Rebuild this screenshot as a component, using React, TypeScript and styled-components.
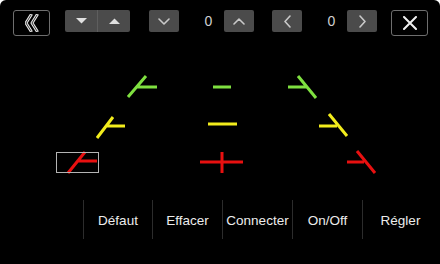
import styled, { createGlobalStyle } from 'styled-components';

const GlobalStyle = createGlobalStyle`
  html, body {
    margin: 0;
    padding: 0;
    background: #ffffff;
  }
  body {
    font-family: 'Liberation Sans', Arial, sans-serif;
  }
`;

const GREEN = '#7fe040';
const YELLOW = '#f2ec1c';
const RED = '#e81010';

const actions = [
  { label: 'Défaut', width: 69 },
  { label: 'Effacer', width: 70 },
  { label: 'Connecter', width: 70 },
  { label: 'On/Off', width: 70 },
  { label: 'Régler', width: 76 },
];

export default function App() {
  return (
    <>
      <GlobalStyle />
      <Screen>
        <TopBar>
          <OutlineButton>
            <svg width="14" height="18" viewBox="0 0 14 18">
              <g fill="none" strokeLinecap="round" strokeLinejoin="round">
                <path d="M6 1 L1 9 L6 17 M12 1 L7 9 L12 17" stroke="#e6e6e6" strokeWidth="3" />
                <path d="M6 1 L1 9 L6 17 M12 1 L7 9 L12 17" stroke="#3a3a3a" strokeWidth="1" />
              </g>
            </svg>
          </OutlineButton>
          <Group>
            <GroupHalf>
              <svg width="11" height="6" viewBox="0 0 11 6">
                <path d="M0 0 H11 L5.5 5.5 Z" fill="#e0e0e0" />
              </svg>
            </GroupHalf>
            <GroupHalf divided>
              <svg width="11" height="6" viewBox="0 0 11 6">
                <path d="M0 6 H11 L5.5 0.5 Z" fill="#e0e0e0" />
              </svg>
            </GroupHalf>
          </Group>
          <StepButton gap={19}>
            <Chevron d="M1 1 L6 6 L11 1" w={12} h={7} />
          </StepButton>
          <Value>0</Value>
          <StepButton>
            <Chevron d="M1 6 L6 1 L11 6" w={12} h={7} />
          </StepButton>
          <StepButton gap={18}>
            <Chevron d="M6 1 L1 6.5 L6 12" w={7} h={13} />
          </StepButton>
          <Value>0</Value>
          <StepButton>
            <Chevron d="M1 1 L6 6.5 L1 12" w={7} h={13} />
          </StepButton>
          <OutlineButton gap={14}>
            <svg width="14" height="14" viewBox="0 0 14 14">
              <path d="M1 1 L13 13 M13 1 L1 13" stroke="#f0f0f0" strokeWidth="2" strokeLinecap="round" />
            </svg>
          </OutlineButton>
        </TopBar>

        <Guides viewBox="0 36 440 164" width="440" height="164">
          <g strokeWidth="3" fill="none">
            <g stroke={GREEN}>
              <path d="M128 97 L146 76 M137 87 H157" />
              <path d="M213 87 H231" />
              <path d="M288 87 H307 M298 76 L316 98" />
            </g>
            <g stroke={YELLOW}>
              <path d="M97 138 L113 117 M106 126 H125" />
              <path d="M208 124 H237" />
              <path d="M319 126 H337 M329 114 L347 136" />
            </g>
            <g stroke={RED}>
              <path d="M68 173 L85 152 M78 161 H97" />
              <path d="M200 162 H243 M222 152 V173" />
              <path d="M347 162 H364 M357 151 L375 173" />
            </g>
          </g>
          <rect x="56.5" y="152.5" width="42" height="20" fill="none" stroke="#b4b4b4" strokeWidth="1" />
        </Guides>

        <ActionBar>
          {actions.map((a) => (
            <ActionButton key={a.label} w={a.width}>
              {a.label}
            </ActionButton>
          ))}
        </ActionBar>
      </Screen>
    </>
  );
}

function Chevron({ d, w, h }: { d: string; w: number; h: number }) {
  return (
    <svg width={w} height={h} viewBox={`0 0 ${w} ${h}`}>
      <path d={d} stroke="#c8c8c8" strokeWidth="1.6" fill="none" strokeLinecap="round" strokeLinejoin="round" />
    </svg>
  );
}

const Screen = styled.div`
  width: 440px;
  height: 264px;
  background: #000;
  border-radius: 6px 6px 0 0;
  overflow: hidden;
  display: flex;
  flex-direction: column;
`;

const TopBar = styled.div`
  height: 36px;
  box-sizing: border-box;
  padding-top: 10px;
  display: flex;
  align-items: flex-start;
`;

const OutlineButton = styled.div<{ gap?: number }>`
  margin-left: ${(p) => p.gap ?? 13}px;
  width: 37px;
  height: 26px;
  box-sizing: border-box;
  border: 1px solid #6e6e6e;
  border-radius: 3px;
  display: flex;
  align-items: center;
  justify-content: center;
`;

const Group = styled.div`
  margin-left: 15px;
  width: 65px;
  height: 22px;
  background: #4b4b4b;
  border-radius: 2px;
  display: flex;
`;

const GroupHalf = styled.div<{ divided?: boolean }>`
  flex: 1;
  display: flex;
  align-items: center;
  justify-content: center;
  border-left: ${(p) => (p.divided ? '1px solid #5e5e5e' : 'none')};
`;

const StepButton = styled.div<{ gap?: number }>`
  margin-left: ${(p) => p.gap ?? 0}px;
  width: 30px;
  height: 22px;
  background: #4b4b4b;
  border-radius: 2px;
  display: flex;
  align-items: center;
  justify-content: center;
`;

const Value = styled.div`
  width: 45px;
  height: 22px;
  box-sizing: border-box;
  padding-left: 14px;
  display: flex;
  align-items: center;
  justify-content: center;
  color: #d0d0d0;
  font-size: 14px;
`;

const Guides = styled.svg`
  display: block;
  flex: none;
`;

const ActionBar = styled.div`
  height: 39px;
  padding-left: 83px;
  display: flex;
`;

const ActionButton = styled.div<{ w: number }>`
  width: ${(p) => p.w}px;
  flex: none;
  border-left: 1px solid #2c2c2c;
  box-sizing: border-box;
  display: flex;
  align-items: center;
  justify-content: center;
  color: #ececec;
  font-size: 13.5px;
  padding-top: 2px;
`;
